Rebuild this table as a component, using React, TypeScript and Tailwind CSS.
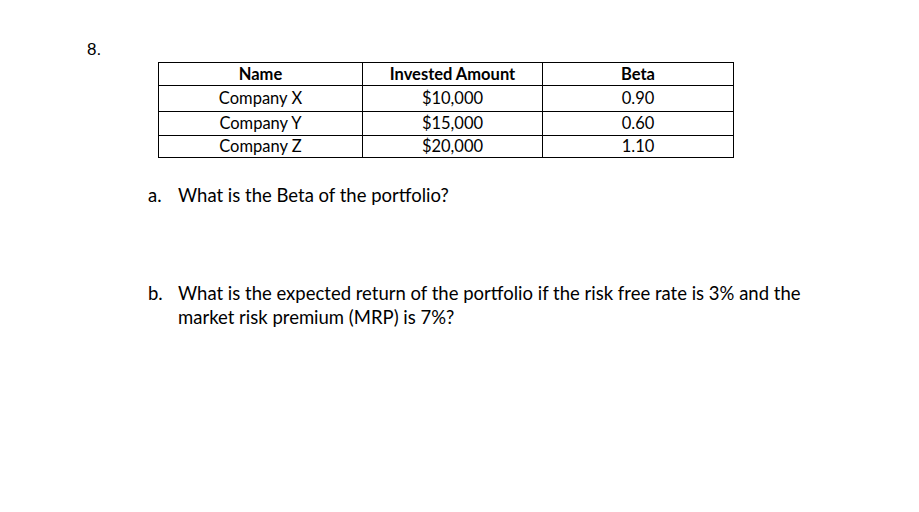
import React from "react";

const rows = [
  { name: "Company X", amount: "$10,000", beta: "0.90", h: "h-[26px]" },
  { name: "Company Y", amount: "$15,000", beta: "0.60", h: "h-[24px]" },
  { name: "Company Z", amount: "$20,000", beta: "1.10", h: "h-[22px]" },
];

const body = "font-['Lato','Open_Sans',sans-serif]";

export default function App() {
  return (
    <div className="w-[919px] h-[512px] bg-white text-black overflow-hidden">
      <div className="pl-[87px] pt-[41px] font-['Liberation_Sans',Arial,sans-serif] text-[17px] leading-[18px]">
        8.
      </div>

      <table className={`ml-[158px] mt-[3px] border-collapse ${body} text-[16.5px]`}>
        <thead>
          <tr className="h-[23px]">
            <th className="w-[204px] border border-black font-bold p-0 leading-none">Name</th>
            <th className="w-[180px] border border-black font-bold p-0 leading-none">Invested Amount</th>
            <th className="w-[191px] border border-black font-bold p-0 leading-none">Beta</th>
          </tr>
        </thead>
        <tbody>
          {rows.map((r) => (
            <tr key={r.name} className={r.h}>
              <td className="border border-black text-center p-0 leading-none">{r.name}</td>
              <td className="border border-black text-center p-0 leading-none">{r.amount}</td>
              <td className="border border-black text-center p-0 leading-none">{r.beta}</td>
            </tr>
          ))}
        </tbody>
      </table>

      <div className={`${body} text-[18.5px] leading-[24px]`}>
        <div className="flex mt-[25px] pl-[148px]">
          <span className="w-[30px]">a.</span>
          <span>What is the Beta of the portfolio?</span>
        </div>
        <div className="flex mt-[74px] pl-[148px]">
          <span className="w-[30px] shrink-0">b.</span>
          <span>
            What is the expected return of the portfolio if the risk free rate is 3% and the
            <br />
            market risk premium (MRP) is 7%?
          </span>
        </div>
      </div>
    </div>
  );
}
